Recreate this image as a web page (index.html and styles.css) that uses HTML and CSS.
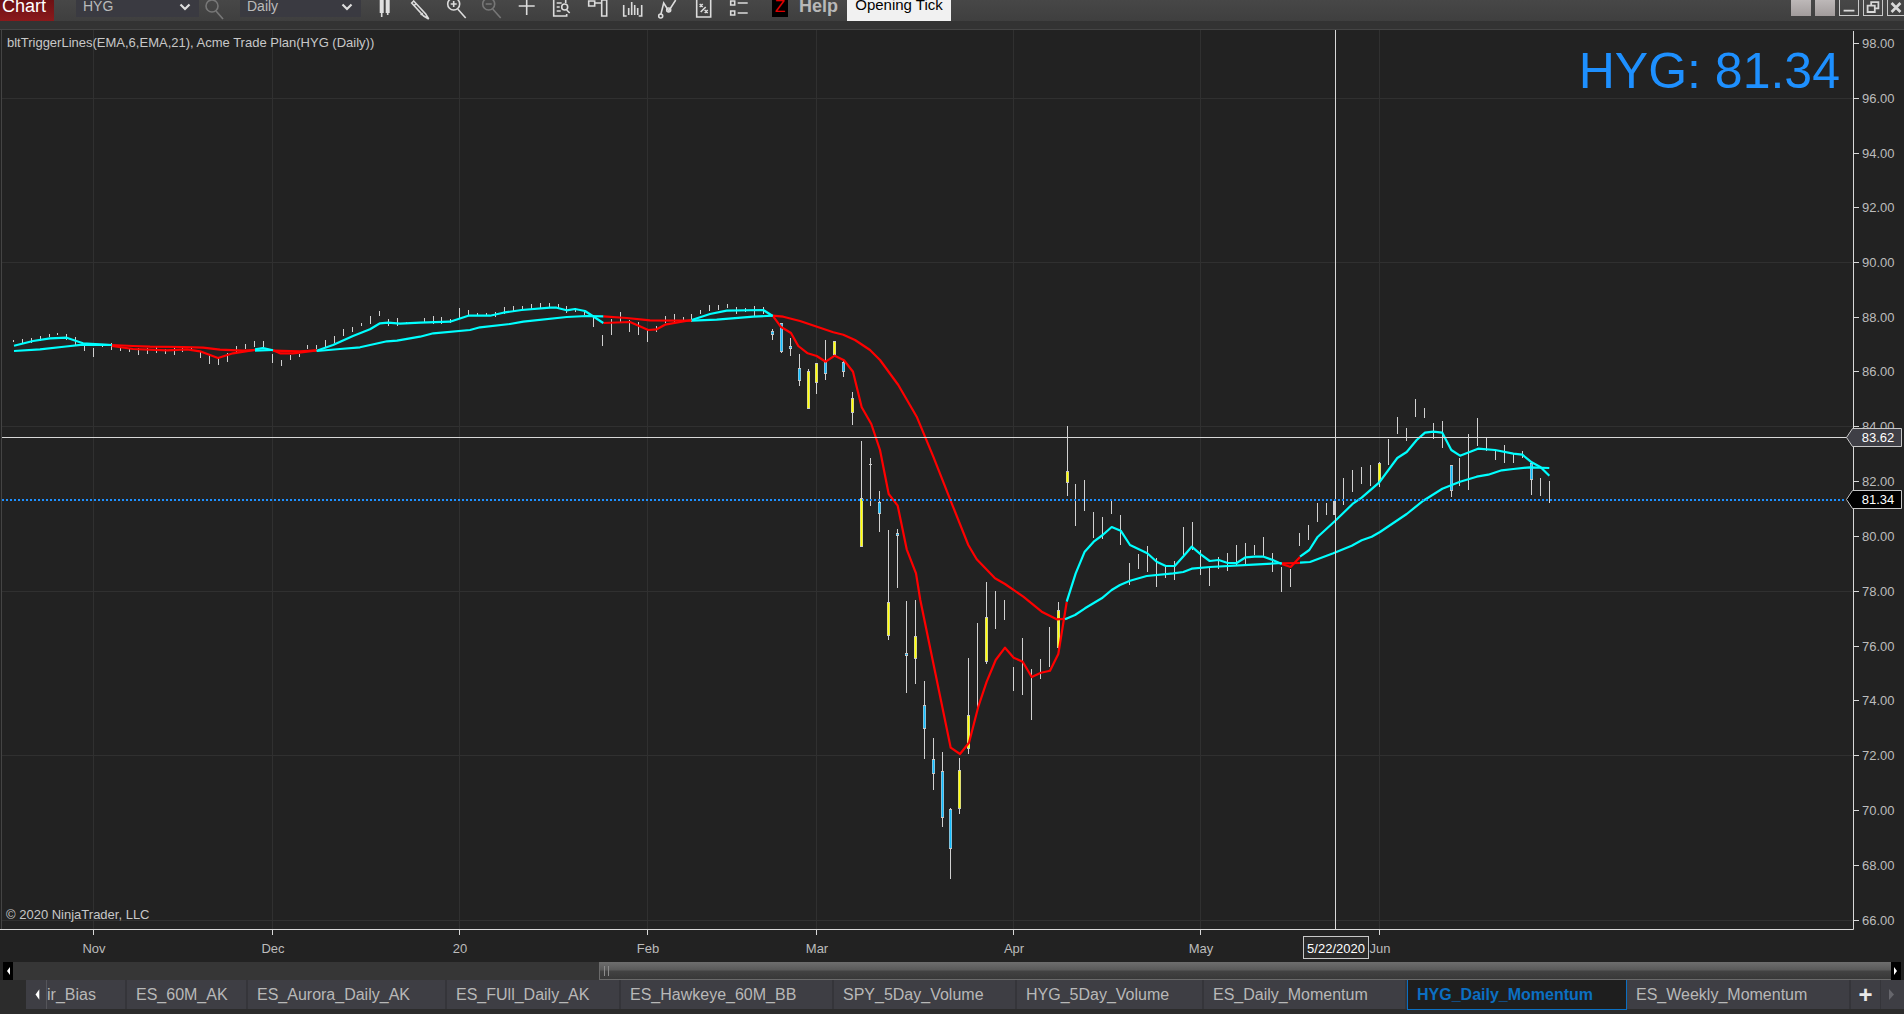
FILE: index.html
```html
<!DOCTYPE html>
<html lang="en">
<head>
    <meta charset="UTF-8">
    <title>HYG Daily Chart</title>
    <link rel="stylesheet" href="styles.css">
</head>
<body>
    <div class="app">
        <div class="toolbar">
            <div class="chart-btn">Chart</div>
            <div class="select first">
                <span>HYG</span>
                <svg class="chevron" viewBox="0 0 12 8"><path d="M1.5 1.5 6 6l4.5-4.5"/></svg>
            </div>
            <div class="search-tool">
                <svg class="icon dim" viewBox="0 0 24 21"><circle cx="10" cy="6" r="6"/><path d="M14 11l7 8"/></svg>
            </div>
            <div class="select second">
                <span>Daily</span>
                <svg class="chevron" viewBox="0 0 12 8"><path d="M1.5 1.5 6 6l4.5-4.5"/></svg>
            </div>
            <div class="tools">
                <svg class="icon" viewBox="0 0 24 21"><path class="solid" d="M7 0h4v13H7zM13 0h4v13h-4z"/><path d="M9 13v4M15 13v2"/></svg>
                <svg class="icon" viewBox="0 0 24 21"><path d="M6 1l12 13 3 5-5-3L4 3zM8 4l-2 2M15 13l-2 2"/></svg>
                <svg class="icon" viewBox="0 0 24 21"><circle cx="10" cy="4" r="6"/><path d="M10 1v6M7 4h6M14 9l8 9" /></svg>
                <svg class="icon dim" viewBox="0 0 24 21"><circle cx="10" cy="4" r="6"/><path d="M7 4h6M14 9l8 9"/></svg>
                <svg class="icon" viewBox="0 0 24 21"><path d="M12 0v15M4 6h16"/></svg>
                <svg class="icon" viewBox="0 0 24 21"><path d="M16 0v3M4 0v16h13v-2M7 3h5M7 7h3M7 11h4"/><circle cx="15" cy="7" r="3"/><path d="M17 10l3 3"/></svg>
                <svg class="icon" viewBox="0 0 24 21"><path d="M4 1h6v5H4zM10 3h7M17 0h5v16h-5z"/></svg>
                <svg class="icon" viewBox="0 0 24 21"><path d="M3 5v11h3M21 5v11h-3M8 8v7M11 2v13M14 5v10M17 8v7"/></svg>
                <svg class="icon" viewBox="0 0 24 21"><path d="M5 15l3-12 5 8 7-11"/><circle cx="5" cy="16" r="2"/><circle cx="13" cy="10" r="2"/></svg>
                <svg class="icon" viewBox="0 0 24 21"><path d="M5 0v17h14V0M8 4l3 3M11 4l-3 3M13 10l3 3M16 10l-3 3M9 12l5-5"/></svg>
                <svg class="icon" viewBox="0 0 24 21"><path d="M4 1h4v4H4zM4 11h4v4H4zM11 3h10M11 13h10"/></svg>
            </div>
            <div class="z-btn">Z</div>
            <div class="help">Help</div>
            <div class="opening">Opening Tick</div>
            <div class="win-btns">
                <div class="win-btn plain"></div>
                <div class="win-btn plain"></div>
                <div class="win-btn outline"><svg viewBox="0 0 20 16"><path d="M4 11.5h12"/></svg></div>
                <div class="win-btn outline"><svg viewBox="0 0 20 16"><path d="M8 5V2h8v7h-3M4 6h8v7H4z"/></svg></div>
                <div class="win-btn outline close"><svg viewBox="0 0 18 16"><path d="M4 3l10 10M14 3 4 13"/></svg></div>
            </div>
        </div>
        <div class="band"></div>

        <svg class="chart" viewBox="0 30 1904 932">
            <path class="frame" d="M1.500 30V929"/>
            <path class="grid" d="M2 98.500H1853M2 262.500H1853M2 426.500H1853M2 591.500H1853M2 755.500H1853M2 920.500H1853"/>
            <path class="grid" d="M93.500 30V929M272.500 30V929M459.500 30V929M647.500 30V929M816.500 30V929M1013.500 30V929M1200.500 30V929M1379.500 30V929"/>
            <g id="candles"></g>
            <g id="lines"></g>

            <path class="cross" d="M2 437.500H1847M1335.500 30V929"/>
            <path class="last-line" d="M2 500H1846"/>
            <path class="axis" d="M0 929.500H1853.500V31"/>
            <path class="axis" d="M93.500 929V935M272.500 929V935M459.500 929V935M647.500 929V935M816.500 929V935M1013.500 929V935M1200.500 929V935M1379.500 929V935"/>
            <path class="axis" d="M1854 43.500H1859M1854 98.500H1859M1854 153.500H1859M1854 207.500H1859M1854 262.500H1859M1854 317.500H1859M1854 371.500H1859M1854 426.500H1859M1854 481.500H1859M1854 536.500H1859M1854 591.500H1859M1854 646.500H1859M1854 700.500H1859M1854 755.500H1859M1854 810.500H1859M1854 865.500H1859M1854 920.500H1859"/>

            <text class="info" x="7" y="47">bltTriggerLines(EMA,6,EMA,21), Acme Trade Plan(HYG (Daily))</text>
            <text class="info" x="6" y="919">© 2020 NinjaTrader, LLC</text>
            <text class="big-price" x="1840" y="88">HYG: 81.34</text>

            <g class="prices">
                <text x="1862" y="48">98.00</text>
                <text x="1862" y="103">96.00</text>
                <text x="1862" y="158">94.00</text>
                <text x="1862" y="212">92.00</text>
                <text x="1862" y="267">90.00</text>
                <text x="1862" y="322">88.00</text>
                <text x="1862" y="376">86.00</text>
                <text x="1862" y="431">84.00</text>
                <text x="1862" y="486">82.00</text>
                <text x="1862" y="541">80.00</text>
                <text x="1862" y="596">78.00</text>
                <text x="1862" y="651">76.00</text>
                <text x="1862" y="705">74.00</text>
                <text x="1862" y="760">72.00</text>
                <text x="1862" y="815">70.00</text>
                <text x="1862" y="870">68.00</text>
                <text x="1862" y="925">66.00</text>
            </g>
            <g class="dates">
                <text x="94" y="953">Nov</text>
                <text x="273" y="953">Dec</text>
                <text x="460" y="953">20</text>
                <text x="648" y="953">Feb</text>
                <text x="817" y="953">Mar</text>
                <text x="1014" y="953">Apr</text>
                <text x="1201" y="953">May</text>
                <text x="1380" y="953">Jun</text>
            </g>

            <path class="tag cross-tag" d="M1846.500 437.500 1852.500 428.500H1901.500V446.500H1852.500Z"/>
            <text class="tag-text" x="1878" y="442">83.62</text>
            <path class="tag last-tag" d="M1846.500 499.500 1852.500 490.500H1901.500V508.500H1852.500Z"/>
            <text class="tag-text" x="1878" y="504">81.34</text>
            <rect class="tag date-tag" x="1303.500" y="936.500" width="65" height="22"/>
            <text class="tag-text" x="1336" y="953">5/22/2020</text>
        </svg>

        <div class="scrollbar">
            <div class="scroll-btn"><svg viewBox="0 0 10 18"><path d="M7 5v8L4 9z"/></svg></div>
            <div class="scroll-track"><div class="scroll-thumb"><span class="grip"></span></div></div>
            <div class="scroll-btn"><svg viewBox="0 0 10 18"><path d="M3 5v8l3-4z"/></svg></div>
        </div>

        <div class="tabs">
            <div class="tab-arrow"><svg viewBox="0 0 21 29"><path d="M14 9v11l-4-5.500z"/></svg></div>
            <div class="tab clipped">ir_Bias</div>
            <div class="tab w-60m">ES_60M_AK</div>
            <div class="tab w-aurora">ES_Aurora_Daily_AK</div>
            <div class="tab w-full">ES_FUll_Daily_AK</div>
            <div class="tab w-hawk">ES_Hawkeye_60M_BB</div>
            <div class="tab w-spy">SPY_5Day_Volume</div>
            <div class="tab w-hyg">HYG_5Day_Volume</div>
            <div class="tab w-esd">ES_Daily_Momentum</div>
            <div class="tab active">HYG_Daily_Momentum</div>
            <div class="tab w-esw">ES_Weekly_Momentum</div>
            <div class="tab-add">+</div>
            <div class="tab-next"><svg viewBox="0 0 23 29"><path d="M8 9v11l5-5.500z"/></svg></div>
        </div>
    </div>
    <script src="chart.js"></script>
</body>
</html>
```

FILE: styles.css
```css
* { box-sizing: border-box; }
html, body { margin: 0; padding: 0; background: #2c2c2c; overflow: hidden; }
body { font-family: "Liberation Sans", Arial, sans-serif; }
.app { width: 1904px; height: 1014px; display: flex; flex-direction: column; }

/* top toolbar */
.toolbar { height: 21px; display: flex; align-items: flex-start; background: linear-gradient(#474747, #3f3f3f); color: #ccc; overflow: hidden; }
.chart-btn { width: 54px; height: 21px; margin-right: 22px; padding-left: 2px; background: linear-gradient(#6d1013, #8a1a1c); color: #fff; font-size: 18px; line-height: 12px; }
.select { height: 17px; display: flex; justify-content: space-between; align-items: flex-start; padding: 0 8px 0 7px; background: #3a3a41; font-size: 14px; line-height: 13px; color: #bbb; }
.select.first { width: 123px; }
.select.second { width: 121px; }
.chevron { width: 12px; height: 8px; margin-top: 3px; fill: none; stroke: #ddd; stroke-width: 2.2; }
.search-tool { width: 41px; height: 21px; padding-left: 2px; }
.tools { display: flex; margin-left: 6px; width: 394px; }
.icon { width: 35.4px; height: 21px; flex: none; fill: none; stroke: #dcdcdc; stroke-width: 1.6; }
.search-tool .icon { width: 26px; }
.icon .solid { fill: #e0e0e0; stroke: none; }
.icon.dim { stroke: #777; }
.z-btn { width: 16px; height: 17px; margin: 0 11px 0 11px; background: #000; color: #e00000; font-size: 17px; line-height: 14px; text-align: center; }
.help { width: 48px; font-size: 18px; font-weight: bold; line-height: 13px; color: #b8b8b8; }
.opening { width: 104px; height: 21px; background: #f1f1f1; color: #000; font-size: 15px; line-height: 10px; text-align: center; }
.win-btns { display: flex; gap: 4px; margin-left: auto; }
.win-btn { width: 20px; height: 16px; }
.win-btn.plain { background: linear-gradient(#bdb8b8, #a29c9c); }
.win-btn.outline { border: 1px solid #c8c8c8; border-top: 0; }
.win-btn.close { width: 17px; border-right: 0; }
.win-btn svg { display: block; width: 100%; height: 100%; fill: none; stroke: #d8d8d8; stroke-width: 2; }
.win-btn.close svg { stroke-width: 3; }
.band { height: 9px; background: #333; border-bottom: 1px solid #454545; }

/* chart */
.chart { display: block; width: 1904px; height: 932px; flex: none; background: #222; }
.frame { stroke: #444; fill: none; }
.grid { stroke: #303030; fill: none; }
.wick { stroke: #d0d0d0; fill: none; }
.body-edge { fill: #c8c8c8; }
.up { fill: #ffff00; }
.down { fill: #10bcff; }
.cyan, .red { fill: none; stroke-width: 2.2; stroke-linejoin: round; }
.cyan { stroke: #00ffff; }
.red { stroke: #ff0000; }
.cross { stroke: #d8d8d8; fill: none; }
.last-line { stroke: #1e90ff; fill: none; stroke-width: 2; stroke-dasharray: 2 2; }
.axis { stroke: #d8d8d8; fill: none; }
.info { font-size: 13px; fill: #c8c8c8; }
.big-price { font-size: 50px; fill: #1e90ff; text-anchor: end; }
.prices text, .dates text { font-size: 13px; fill: #bcbcbc; }
.dates text { text-anchor: middle; }
.tag { stroke: #c8c8c8; }
.cross-tag { fill: #3f3f46; }
.last-tag { fill: #000; }
.date-tag { fill: #2a2a2a; }
.tag-text { font-size: 13px; fill: #fff; text-anchor: middle; }

/* horizontal scrollbar */
.scrollbar { height: 18px; flex: none; display: flex; padding: 0 3px; background: #222; }
.scroll-btn { width: 10px; height: 18px; background: #000; flex: none; }
.scroll-btn svg { display: block; width: 100%; height: 100%; fill: #fff; }
.scroll-track { flex: 1; display: flex; justify-content: flex-end; background: #363636; }
.scroll-thumb { width: 1292px; height: 18px; padding: 4px 0 0 4px; background: linear-gradient(#6e6e6e, #5a5a5a 45%, #424242 55%, #383838); border: 1px solid #6a6a6a; border-width: 0 0 1px 1px; }
.grip { display: block; width: 5px; height: 10px; border-left: 1px solid #8c8c8c; border-right: 1px solid #8c8c8c; }

/* workspace tabs */
.tabs { height: 29px; flex: none; display: flex; margin-left: 26px; background: #3e3e44; color: #b8b8b8; font-size: 16px; line-height: 30px; }
.tab { flex: none; padding-left: 9px; background: #3e3e44; border-right: 2px solid #35353a; white-space: nowrap; }
.clipped { width: 80px; padding-left: 0; }
.w-60m { width: 121px; }
.w-aurora { width: 199px; }
.w-full { width: 174px; }
.w-hawk { width: 213px; }
.w-spy { width: 183px; }
.w-hyg { width: 187px; }
.w-esd { width: 203px; }
.tab.active { width: 220px; height: 30px; background: #1e1e1e; color: #0b6fc2; font-weight: bold; border: 1px solid #0b6fc2; border-top: 0; }
.w-esw { width: 224px; border-right: 2px solid #35353a; }
.tab-arrow { width: 21px; flex: none; border-right: 1px solid #55555a; }
.tab-arrow svg, .tab-next svg { display: block; width: 100%; height: 100%; fill: #fff; }
.tab-add { width: 30px; flex: none; text-align: center; color: #e8e8e8; font-size: 24px; font-weight: bold; border-right: 1px solid #35353a; }
.tab-next { width: 23px; flex: none; }
.tab-next svg { fill: #66666c; }
```

FILE: chart.js
```js
// bars are laid out from the first one at this x, pixel coords come straight from the chart
const firstX = 13.3, barStep = 8.93;
const svgNs = 'http://www.w3.org/2000/svg';

function barX(i) {
    return Math.floor(firstX + barStep * i);
}

// [top, bottom] of each wick, one per bar
const wicks = [
    [340,342],[339,343],[338,343],[336,341],[334,337],[333,335],[334,340],[337,345],[343,351],[348,357],
    [345,347],[343,350],[347,351],[348,352],[348,355],[348,354],[347,353],[349,354],[348,355],[346,352],
    [347,351],[352,358],[355,364],[358,365],[353,362],[346,353],[344,349],[341,347],[341,347],[354,363],
    [360,366],[355,360],[354,357],[345,349],[345,349],[340,347],[336,343],[329,336],[327,332],[323,326],
    [316,324],[311,316],[319,326],[318,326],[322,324],[322,324],[318,323],[316,324],[317,324],[319,323],
    [308,318],[310,316],[313,316],[313,316],[312,317],[307,314],[306,311],[306,309],[304,310],[303,308],
    [303,308],[304,308],[306,313],[308,312],[312,315],[315,327],[335,346],[319,335],[312,322],[320,332],
    [322,335],[330,342],[326,332],[316,323],[314,322],[317,322],[314,322],[310,314],[305,311],[305,310],
    [304,308],[307,314],[308,312],[306,316],[307,314],[329,340],[323,353],[338,356],[354,386],[369,409],
    [363,394],[340,380],[341,355],[359,377],[392,425],[441,547],[458,506],[491,532],[530,640],[529,588],
    [601,693],[600,684],[681,759],[738,790],[752,827],[808,879],[758,814],[658,754],[623,710],[582,664],
    [591,629],[600,620],[667,691],[638,695],[669,720],[659,679],[627,667],[602,654],[426,496],[484,526],
    [480,511],[512,538],[517,539],[500,514],[515,545],[563,585],[554,569],[546,572],[558,587],[566,578],
    [561,580],[527,555],[522,550],[550,575],[568,586],[557,569],[553,571],[545,565],[543,565],[545,555],
    [537,557],[553,572],[567,592],[569,587],[533,546],[525,540],[503,522],[503,515],[501,515],[478,505],
    [470,492],[467,484],[465,486],[462,487],[439,465],[417,434],[428,441],[399,417],[408,418],[423,439],
    [421,448],[465,497],[458,486],[434,490],[418,446],[438,451],[450,460],[445,463],[453,463],[451,458],
    [463,495],[478,496],[481,503]
];

// bar index, top, bottom, colour class of the candles that have a visible body
const bodies = [
    [85,331,335,'down'],[86,323,352,'down'],[87,346,349,'down'],[88,368,381,'down'],[89,371,409,'up'],
    [90,363,383,'up'],[91,362,374,'down'],[92,341,355,'up'],[93,362,372,'down'],[94,398,413,'up'],
    [95,498,547,'up'],[96,464,465,'edge'],[97,502,514,'down'],[98,602,636,'up'],[99,533,536,'down'],
    [100,653,656,'down'],[101,636,659,'up'],[102,705,729,'down'],[103,759,774,'down'],[104,771,818,'down'],
    [105,809,849,'down'],[106,770,809,'up'],[107,715,749,'up'],[109,617,662,'up'],[117,610,648,'up'],
    [118,471,483,'up'],[148,501,515,'edge'],[153,463,482,'up'],[161,465,491,'down'],[170,463,480,'down']
];

const redLines = [
    '111.7,345 133,346 150,346.7 183,347 203,347.7 220,349.7 243,350.7 255,350',
    '111.7,346 133,349 167,350.3 187,349.3 200,351.3 218,358 233,353.3 255,350',
    '273,350.3 280,353.3 293,353.3 317,350.3',
    '273,350.7 300,351.3 317,350.3',
    '603.3,316.3 626.7,318 650,320.3 691.7,320.7',
    '603.3,323 630,322 648.3,330 656.7,329.3 665,324.7 691.7,320',
    '772.7,315.7 783.3,316.7 800,321 833.3,332.3 843.3,334.7 855,340 870,350 880,360 898.3,385 916.7,416.7 933.3,456.7 951.7,503.3 968.3,545 976.7,559.3 995,578.3 1005,584 1023.3,596.7 1041.7,611.7 1056.7,619.3 1067.3,618.7',
    '772.7,315.7 780.7,326.7 791,333 798.3,346 807.7,353.3 816.7,356 825.7,361.7 834.7,355.7 844,360.3 853,371.7 861.7,407.3 871.3,424 880,450 888.7,494 897.7,505.7 906.7,549.3 916,573.3 920.3,600 950.7,747.7 960,754 969,742.7 978.3,706.7 986.7,681.7 995.7,660 1005,647.7 1013.7,657.7 1022.7,661.7 1031.7,677 1041,672.7 1050,670.7 1058.3,654 1066.7,602',
    '1281.7,564 1290.7,567 1300,557',
    '1281.7,563.3 1300,563'
];

const cyanLines = [
    '14,345.7 33,341 50,338.3 66.7,337.7 83,343.3 111.7,345',
    '14,351 40,349.3 66,346.5 83,344.7 111.7,345',
    '255,349.3 263,348 273,350.3',
    '255,350.7 273,350',
    '316.7,350.7 333,345 353,336 370,329.3 380,323.3 388,322.7 400,323.7 420,322.7 450,321.7 468.3,315.7 490,315.7 503.3,312.7 521.7,310 550,307.7 556.7,307.7 566.7,310.3 575,309 585,311 603.3,323',
    '316.7,351 340,349 360,347.3 387,341.3 397,340.7 420,336.7 433.3,333.3 470,330 480,327.3 510,324 523.3,321.7 566.7,317 586.7,316 603.3,316.3',
    '691.7,320 710,314 726.7,310.7 763.3,310 772.7,316',
    '691.7,320.7 716.7,319.7 753.3,316.7 772.7,315.7',
    '1066.7,601.7 1075.7,573.3 1084.7,551.7 1093.7,541.7 1102.7,535 1111.7,527 1120.7,530.7 1130,545 1147.3,553.3 1156.7,561.7 1165.7,566 1174.7,566 1183.7,556 1191.7,546.7 1200.7,554.3 1209.7,561 1218.7,560 1227.7,563 1236.7,563 1245.7,557.3 1254.7,556.7 1263.7,556.7 1272.7,560 1281.7,564',
    '1065,619.3 1075,615 1085,608.3 1101.7,598.3 1111.7,590 1120,585 1130,580.7 1146.7,576 1173.3,573.3 1183.3,572 1191.7,568.7 1210,567 1253.3,564.7 1281.7,563',
    '1300,556.7 1309.3,550 1317.3,537.3 1335,521 1353.3,503.3 1361.7,497.7 1379.3,482.3 1397.3,458 1406.7,452 1416.7,440 1425,432.7 1433.3,431.7 1442.3,432.7 1451.3,450 1460,455.7 1478,448.7 1495,450 1513.3,453.7 1522.3,454.7 1531.7,462.3 1540.7,467.3 1549.3,475.7',
    '1300,562.7 1310,562 1333.3,553.3 1351.7,545.7 1361.7,540.3 1371.7,536.7 1380,532 1406.7,514 1423.3,500.7 1442.3,488.7 1460,481.7 1476.7,476.7 1488.3,474.7 1501.7,470.3 1513.3,469 1530,467.3 1549.3,468'
];

function addEl(parent, name, attrs) {
    const el = document.createElementNS(svgNs, name);
    for (const key in attrs) {
        el.setAttribute(key, attrs[key]);
    }
    parent.appendChild(el);
    return el;
}

const candles = document.getElementById('candles');
const lines = document.getElementById('lines');

// Wicks
let wickPath = '';
wicks.forEach((w, i) => {
    wickPath += `M${barX(i) + 0.5} ${w[0]}V${w[1]}`;
});
addEl(candles, 'path', { class: 'wick', d: wickPath });

// Candle bodies: grey edge with a coloured core
bodies.forEach(([i, top, bottom, color]) => {
    const x = barX(i);
    addEl(candles, 'rect', { class: 'body-edge', x: x - 1, y: top, width: 3, height: bottom - top });
    if (color !== 'edge') {
        addEl(candles, 'rect', { class: color, x: x - 0.4, y: top + 1, width: 1.8, height: Math.max(bottom - top - 2, 1) });
    }
});

// Indicator lines
redLines.forEach(points => addEl(lines, 'polyline', { class: 'red', points: points }));
cyanLines.forEach(points => addEl(lines, 'polyline', { class: 'cyan', points: points }));
```
